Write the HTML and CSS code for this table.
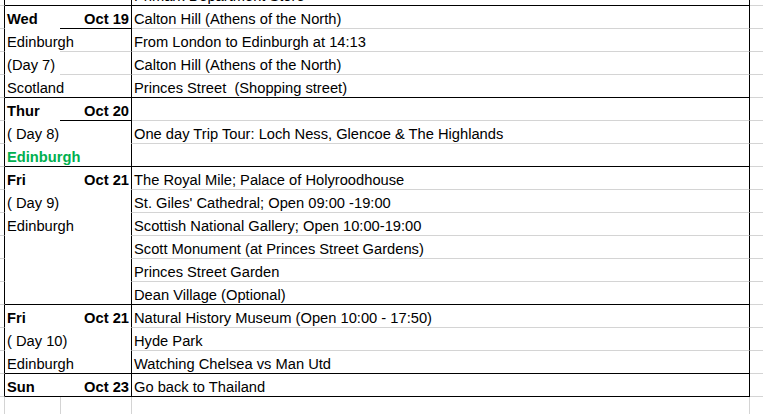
FILE: index.html
```html
<!DOCTYPE html>
<html>
<head>
<meta charset="utf-8">
<title>Trip Plan</title>
<link rel="stylesheet" href="styles.css">
</head>
<body>
<div class="sheet">
  <div class="row">
    <div class="g"></div><div class="a k"></div><div class="b k"></div><div class="c k">Primark Department Store</div><div class="r"></div>
  </div>
  <div class="row">
    <div class="g"></div><div class="a bold">Wed</div><div class="b k bold">Oct 19</div><div class="c">Calton Hill (Athens of the North)</div><div class="r"></div>
  </div>
  <div class="row">
    <div class="g"></div><div class="a">Edinburgh</div><div class="b s"></div><div class="c">From London to Edinburgh at 14:13</div><div class="r"></div>
  </div>
  <div class="row">
    <div class="g"></div><div class="a">(Day 7)</div><div class="b s"></div><div class="c">Calton Hill (Athens of the North)</div><div class="r"></div>
  </div>
  <div class="row">
    <div class="g"></div><div class="a k">Scotland</div><div class="b k"></div><div class="c k">Princes Street  (Shopping street)</div><div class="r"></div>
  </div>
  <div class="row">
    <div class="g"></div><div class="a bold">Thur</div><div class="b k bold">Oct 20</div><div class="c"></div><div class="r"></div>
  </div>
  <div class="row">
    <div class="g"></div><div class="a">( Day 8)</div><div class="b"></div><div class="c">One day Trip Tour: Loch Ness, Glencoe &amp; The Highlands</div><div class="r"></div>
  </div>
  <div class="row">
    <div class="g"></div><div class="a k bold green">Edinburgh</div><div class="b k"></div><div class="c k"></div><div class="r"></div>
  </div>
  <div class="row">
    <div class="g"></div><div class="a bold">Fri</div><div class="b bold">Oct 21</div><div class="c">The Royal Mile; Palace of Holyroodhouse</div><div class="r"></div>
  </div>
  <div class="row">
    <div class="g"></div><div class="a">( Day 9)</div><div class="b"></div><div class="c">St. Giles' Cathedral; Open 09:00 -19:00</div><div class="r"></div>
  </div>
  <div class="row">
    <div class="g"></div><div class="a">Edinburgh</div><div class="b"></div><div class="c">Scottish National Gallery; Open 10:00-19:00</div><div class="r"></div>
  </div>
  <div class="row">
    <div class="g"></div><div class="a"></div><div class="b"></div><div class="c">Scott Monument (at Princes Street Gardens)</div><div class="r"></div>
  </div>
  <div class="row">
    <div class="g"></div><div class="a"></div><div class="b"></div><div class="c">Princes Street Garden</div><div class="r"></div>
  </div>
  <div class="row">
    <div class="g"></div><div class="a k"></div><div class="b k"></div><div class="c k">Dean Village (Optional)</div><div class="r"></div>
  </div>
  <div class="row">
    <div class="g"></div><div class="a bold">Fri</div><div class="b bold">Oct 21</div><div class="c">Natural History Museum (Open 10:00 - 17:50)</div><div class="r"></div>
  </div>
  <div class="row">
    <div class="g"></div><div class="a">( Day 10)</div><div class="b"></div><div class="c">Hyde Park</div><div class="r"></div>
  </div>
  <div class="row">
    <div class="g"></div><div class="a k">Edinburgh</div><div class="b k"></div><div class="c k">Watching Chelsea vs Man Utd</div><div class="r"></div>
  </div>
  <div class="row">
    <div class="g"></div><div class="a k bold">Sun</div><div class="b k bold">Oct 23</div><div class="c k">Go back to Thailand</div><div class="r"></div>
  </div>
  <div class="row empty">
    <div class="g"></div><div class="a s"></div><div class="b s"></div><div class="c"></div><div class="r"></div>
  </div>
</div>
</body>
</html>
```

FILE: styles.css
```css
html, body {
  margin: 0;
  padding: 0;
  background: #ffffff;
}

body {
  width: 763px;
  height: 414px;
  overflow: hidden;
  font-family: "Liberation Sans", Arial, sans-serif;
  font-size: 14.7px;
  color: #000000;
}

.sheet {
  margin-top: -17px;
}

.row {
  display: flex;
  height: 23px;
}

.row > div {
  box-sizing: border-box;
  flex: none;
  min-width: 0;
  height: 23px;
  display: flex;
  align-items: flex-end;
  padding-bottom: 1px;
  white-space: pre;
  line-height: normal;
  border-bottom: 1px solid transparent;
}

.g {
  width: 5px;
  border-right: 1px solid #000000;
  border-bottom-color: #d4d4d4 !important;
}

.a {
  width: 55px;
  padding-left: 2px;
}

.b {
  width: 72px;
  justify-content: flex-end;
  padding-right: 2px;
  border-right: 1px solid #000000;
}

.c {
  width: 618px;
  padding-left: 2px;
  border-right: 1px solid #000000;
  border-bottom-color: #d4d4d4 !important;
}

.c.k {
  border-bottom-color: #000000 !important;
}

.row > .r {
  flex: 1 1 auto;
  border-bottom-color: #d4d4d4;
}

.row > .k {
  border-bottom-color: #000000;
}

.row > .s {
  border-bottom-color: #d4d4d4;
}

.bold {
  font-weight: bold;
}

.green {
  color: #00b050;
}

.empty > .g {
  border-right-color: #d4d4d4;
}

.empty > .b {
  border-left: 1px solid #d4d4d4;
  border-right-color: #d4d4d4;
}

.empty > .c {
  border-right-color: #d4d4d4;
}
```
